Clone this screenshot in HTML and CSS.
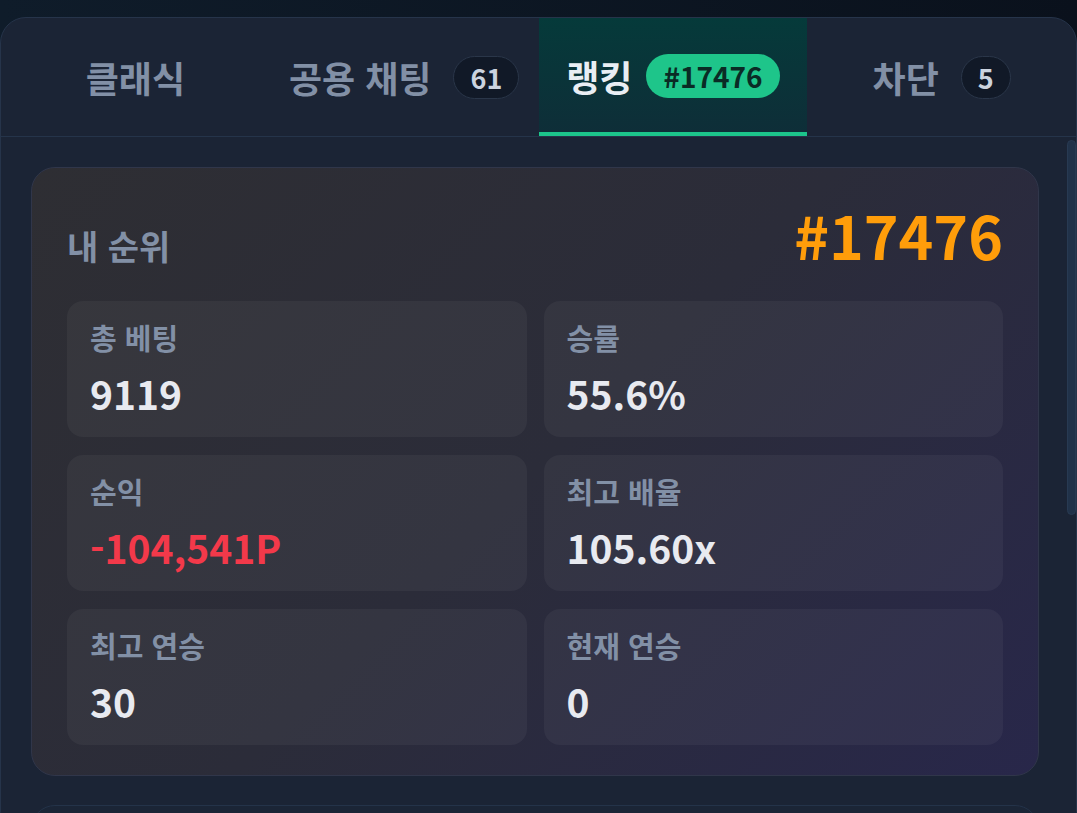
FILE: index.html
```html
<!DOCTYPE html>
<html lang="ko">
<head>
<meta charset="utf-8">
<title>랭킹</title>
<link rel="stylesheet" href="styles.css">
</head>
<body>
	<div class="panel">
		<nav class="tabs">
			<div class="tab">클래식</div>
			<div class="tab">공용 채팅 <span class="count">61</span></div>
			<div class="tab active">랭킹 <span class="rank-badge">#17476</span></div>
			<div class="tab">차단 <span class="count">5</span></div>
		</nav>
		<div class="scroll">
			<section class="my-rank">
				<div class="rank-head">
					<h2>내 순위</h2>
					<span class="rank-num">#17476</span>
				</div>
				<div class="stats">
					<div class="stat">
						<div class="label">총 베팅</div>
						<div class="value">9119</div>
					</div>
					<div class="stat">
						<div class="label">승률</div>
						<div class="value">55.6%</div>
					</div>
					<div class="stat">
						<div class="label">순익</div>
						<div class="value minus">-104,541P</div>
					</div>
					<div class="stat">
						<div class="label">최고 배율</div>
						<div class="value">105.60x</div>
					</div>
					<div class="stat">
						<div class="label">최고 연승</div>
						<div class="value">30</div>
					</div>
					<div class="stat">
						<div class="label">현재 연승</div>
						<div class="value">0</div>
					</div>
				</div>
			</section>
			<section class="board"></section>
		</div>
		<div class="scroll-thumb"></div>
	</div>
</body>
</html>
```

FILE: styles.css
```css
html, body {
  margin: 0;
  padding: 0;
}

body {
  height: 813px;
  overflow: hidden;
  background: linear-gradient(90deg, #0f1c2a, #0a111c);
  font-family: "Noto Sans CJK KR", "Noto Sans", sans-serif;
}

/* || panel */

.panel {
  position: relative;
  margin-top: 17px;
  height: 820px;
  box-sizing: border-box;
  border: 1px solid #26344a;
  border-radius: 26px;
  background-color: #1b2435;
  display: flex;
  flex-direction: column;
  overflow: hidden;
}

.tabs {
  display: flex;
  height: 118px;
  flex-shrink: 0;
  border-bottom: 1px solid #25344a;
}

.tab {
  flex: 1;
  display: flex;
  align-items: center;
  justify-content: center;
  gap: 12px;
  font-size: 36px;
  font-weight: 700;
  color: #8290a6;
  box-sizing: border-box;
}

.tab.active {
  color: #e9eef4;
  background: linear-gradient(180deg, #053a3a, #0e2e38);
  border-bottom: 4px solid #1cc58b;
  padding-top: 2px;
}

.count {
  display: inline-flex;
  align-items: center;
  justify-content: center;
  height: 41px;
  margin-left: 10px;
  padding: 0 16px;
  border: 1px solid #2a3649;
  border-radius: 22px;
  background-color: #111927;
  color: #cbd3df;
  font-size: 27px;
}

.rank-badge {
  display: inline-flex;
  align-items: center;
  height: 44px;
  margin-left: 2px;
  padding: 0 17px;
  border-radius: 22px;
  background-color: #1ec58a;
  color: #0a2b25;
  font-size: 28px;
  font-weight: 600;
}

/* || scroll area */

.scroll {
  flex: 1;
  overflow: hidden;
  padding: 30px 37px 30px 30px;
}

.scroll-thumb {
  position: absolute;
  top: 122px;
  right: 0;
  width: 9px;
  height: 375px;
  box-sizing: border-box;
  border: 1px solid #283a52;
  border-radius: 5px;
  background-color: #213249;
}

.my-rank {
  border: 1px solid #30364a;
  border-radius: 24px;
  background: linear-gradient(135deg, #2e2e33 0%, #2b2c39 50%, #28274a 100%);
  padding: 31px 35px 30px 35px;
}

.rank-head {
  display: flex;
  justify-content: space-between;
  align-items: baseline;
  height: 72px;
  margin-bottom: 30px;
}

.rank-head h2 {
  margin: 0;
  font-size: 34px;
  font-weight: 700;
  color: #8290a6;
}

.rank-num {
  font-size: 59px;
  font-weight: 700;
  line-height: 72px;
  color: #ff9d0a;
}

.stats {
  display: grid;
  grid-template-columns: 1fr 1fr;
  column-gap: 17px;
  row-gap: 18px;
}

.stat {
  height: 136px;
  box-sizing: border-box;
  padding: 17px 23px;
  border-radius: 16px;
  background-color: rgba(255, 255, 255, 0.045);
}

.label {
  font-size: 29px;
  font-weight: 700;
  line-height: 38px;
  color: #8290a6;
}

.value {
  margin-top: 13px;
  font-size: 39px;
  font-weight: 700;
  line-height: 48px;
  color: #e8eaf0;
}

.value.minus {
  color: #f3394a;
}

.board {
  margin-top: 29px;
  height: 600px;
  border: 1px solid #243349;
  border-radius: 24px;
  background-color: #1b2536;
}
```
